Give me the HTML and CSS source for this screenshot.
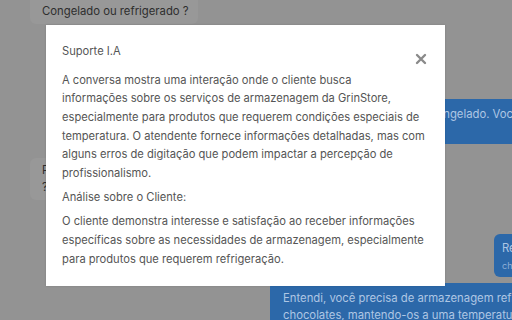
FILE: index.html
```html
<!DOCTYPE html>
<html lang="pt">
<head>
<meta charset="utf-8">
<link rel="stylesheet" href="styles.css">
</head>
<body>
<div class="chat">
  <div class="msg in first">Congelado ou refrigerado ?</div>
  <div class="msg out second">congelado. Você prefere<br><span class="meta">c</span></div>
  <div class="msg in third">Pode me passar mais detalhes<br>?</div>
  <div class="msg out fourth">Refrigerado<br><span class="meta">chocolates</span></div>
  <div class="msg out fifth">Entendi, você precisa de armazenagem refrigerada para<br>chocolates, mantendo-os a uma temperatura adequada.</div>
</div>
<div class="modal">
  <div class="modal-head">
    <div class="modal-title">Suporte I.A</div>
    <svg class="close" width="12" height="12" viewBox="0 0 12 12"><path d="M2 2 L10 10 M10 2 L2 10" stroke="#8a8a8a" stroke-width="2.4" stroke-linecap="round"/></svg>
  </div>
  <p class="para">A conversa mostra uma interação onde o cliente busca<br>informações sobre os serviços de armazenagem da GrinStore,<br>especialmente para produtos que requerem condições especiais de<br>temperatura. O atendente fornece informações detalhadas, mas com<br>alguns erros de digitação que podem impactar a percepção de<br>profissionalismo.</p>
  <p class="para">Análise sobre o Cliente:</p>
  <p class="para">O cliente demonstra interesse e satisfação ao receber informações<br>específicas sobre as necessidades de armazenagem, especialmente<br>para produtos que requerem refrigeração.</p>
</div>
</body>
</html>
```

FILE: styles.css
```css
html, body {
  margin: 0;
  padding: 0;
}
body {
  width: 512px;
  height: 320px;
  overflow: hidden;
  background: #939393;
  font-family: Inter, "Noto Sans", sans-serif;
  position: relative;
}
.chat {
  width: 512px;
  display: flex;
  flex-direction: column;
  padding-left: 30px;
  box-sizing: border-box;
}
.msg {
  font-size: 11.3px;
  line-height: 17px;
  box-sizing: border-box;
  white-space: nowrap;
  overflow: hidden;
}
.in {
  align-self: flex-start;
  background: #989898;
  color: #2e2e2e;
  padding: 4px 12px;
  border-radius: 0 0 6px 6px;
}
.out {
  background: #2c68a9;
  color: #aec6e4;
  border-radius: 6px;
}
.first {
  width: 168px;
  height: 24px;
  padding-top: 3px;
}
.second {
  margin-top: 75px;
  margin-left: 388px;
  width: 140px;
  height: 45px;
  padding: 7px 12px 4px;
}
.third {
  margin-top: 14px;
  height: 42px;
  width: 200px;
  border-radius: 6px;
  padding: 4px 12px;
}
.fourth {
  margin-top: 34px;
  margin-left: 464px;
  width: 80px;
  height: 43px;
  padding: 6px 8px;
}
.meta {
  font-size: 9px;
  color: #8fb0d8;
}
.fifth {
  margin-top: 6px;
  margin-left: 240px;
  width: 370px;
  height: 60px;
  padding: 7px 13px;
  border-radius: 4px 0 0 0;
}
.modal {
  position: absolute;
  left: 46px;
  top: 25px;
  width: 399px;
  height: 261px;
  box-sizing: border-box;
  background: #ffffff;
  padding: 17px 15px 0 16px;
  color: #555555;
  font-size: 11.15px;
  line-height: 18.7px;
  box-shadow: 0 0 2px rgba(0,0,0,0.15);
}
.modal-head {
  display: flex;
  justify-content: space-between;
  align-items: flex-start;
}
.close {
  margin-top: 11px;
  margin-right: 3px;
}
.para {
  margin: 5.5px 0 0 0;
  white-space: nowrap;
}
```
